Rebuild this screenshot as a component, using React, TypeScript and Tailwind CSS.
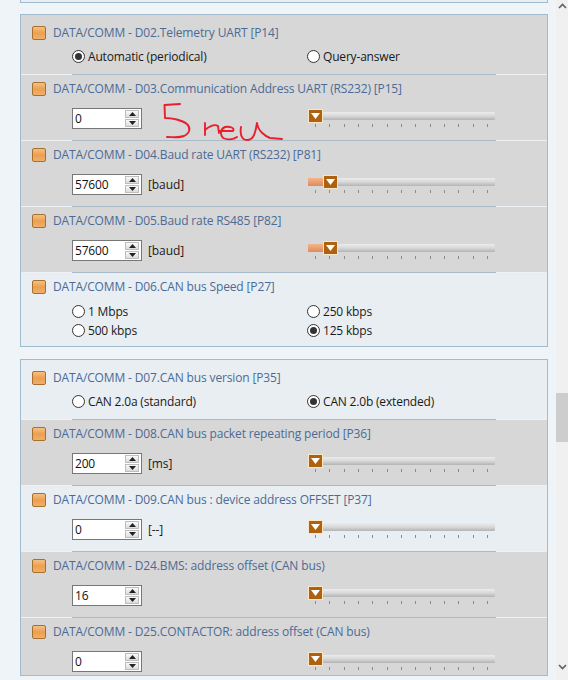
import React from "react";

const Icon = () => (
  <span className="block w-[14px] h-[14px] shrink-0 rounded-[2px] border border-[#a8702e] bg-gradient-to-b from-[#f3c083] via-[#ec9f4e] to-[#eeb06c]" />
);

const Title = ({ t }: { t: string }) => (
  <div className="flex items-center h-[24px] pl-[11px] gap-[7px]">
    <Icon />
    <span className="text-[#4b6b96] text-[12px] tracking-[-0.14px] whitespace-nowrap leading-[16px]">{t}</span>
  </div>
);

const Radio = ({ on, label }: { on?: boolean; label: string }) => (
  <div className="flex items-center gap-[3px] h-[19px] w-[235px] text-[#1a1a1a] text-[12px] tracking-[-0.18px]">
    <span className="flex items-center justify-center w-[13px] h-[13px] rounded-full border border-[#333] bg-white">
      {on && <span className="block w-[7px] h-[7px] rounded-full bg-[#333]" />}
    </span>
    <span className="whitespace-nowrap">{label}</span>
  </div>
);

const Arrow = ({ up }: { up?: boolean }) => (
  <span className="flex items-center justify-center w-[14px] h-[8px] bg-gradient-to-b from-[#fafafa] to-[#dcdcdc] border border-[#bdbdbd]">
    <svg width="7" height="4" viewBox="0 0 7 4">
      <path d={up ? "M3.5 0L7 4H0Z" : "M0 0H7L3.5 4Z"} fill="#222" />
    </svg>
  </span>
);

const Spin = ({ v }: { v: string }) => (
  <div className="flex items-center justify-between w-[70px] h-[21px] bg-white border border-[#777] pl-[2px] pr-[2px]">
    <span className="text-[12px] tracking-[-0.18px] text-[#111]">{v}</span>
    <span className="flex flex-col gap-[1px]">
      <Arrow up />
      <Arrow />
    </span>
  </div>
);

const Ticks = () => (
  <div className="flex justify-between w-[173px] ml-[7px] mt-[1px]">
    {Array.from({ length: 13 }).map((_, i) => (
      <span key={i} className="block w-px h-[3px] bg-[#8a8a8a]" />
    ))}
  </div>
);

const Slider = ({ fill }: { fill?: boolean }) => (
  <div className="w-[187px]">
    <div className="flex items-center h-[15px]">
      {fill && <span className="block w-[15px] h-[8px] bg-gradient-to-b from-[#f4b48a] to-[#e08a58]" />}
      <span className="flex items-center justify-center w-[15px] h-[14px] shrink-0 bg-[#ae620f] border border-[#f7e6c8]">
        <svg width="9" height="6" viewBox="0 0 9 6">
          <path d="M0 0H9L4.5 6Z" fill="#fff" />
        </svg>
      </span>
      <span className="block flex-1 h-[8px] rounded-r-[1px] bg-gradient-to-b from-[#ececec] via-[#d8d8d8] to-[#b4b4b4]" />
    </div>
    <Ticks />
  </div>
);

const Divider = () => (
  <div className="flex h-px">
    <span className="block w-[51px] bg-[#edf2f6]" />
    <span className="block w-[424px] bg-[#a9bbc9]" />
    <span className="block flex-1 bg-[#edf2f6]" />
  </div>
);

const Row = ({
  t,
  dark,
  h,
  pt,
  last,
  children,
}: {
  t: string;
  dark?: boolean;
  h: string;
  pt?: string;
  last?: boolean;
  children: React.ReactNode;
}) => (
  <div className={dark ? "bg-[#d7d7d7]" : "bg-[#e8eef2]"}>
    <div className={`${h} ${pt ?? "pt-[2px]"}`}>
      <Title t={t} />
      {children}
    </div>
    {!last && <Divider />}
  </div>
);

const SpinRow = ({
  t,
  dark,
  v,
  unit,
  fill,
  last,
  h,
}: {
  t: string;
  dark?: boolean;
  v: string;
  unit?: string;
  fill?: boolean;
  last?: boolean;
  h?: string;
}) => (
  <Row t={t} dark={dark} h={h ?? "h-[65px]"} last={last}>
    <div className="flex items-start pl-[51px] pt-[7px]">
      <Spin v={v} />
      <span className="w-[166px] pl-[6px] text-[12px] tracking-[-0.1px] leading-[21px] text-[#1a1a1a]">{unit}</span>
      <Slider fill={fill} />
    </div>
  </Row>
);

const RadioRow = ({
  t,
  dark,
  children,
}: {
  t: string;
  dark?: boolean;
  children: React.ReactNode;
}) => (
  <Row t={t} dark={dark} h="h-[59px]" pt="pt-[6px]">
    <div className="flex pl-[51px] pt-[2px]">{children}</div>
  </Row>
);

const Hand = () => (
  <svg className="absolute left-[155px] top-[98px]" width="135" height="46" viewBox="0 0 135 46" fill="none">
    <path
      d="M25 6L9.5 7L10 20C17 20 27 22 32 26C36 30 35 35 29 38C24 40 18 39 12 39"
      stroke="#e8202c"
      strokeWidth="1.9"
      strokeLinecap="round"
      strokeLinejoin="round"
    />
    <path
      d="M50 37L50 25M50 32C55 28 60 26 63 28L64 35M64 33H78C80 30 75 28 70 29C65 31 65 37 68 40C72 42 78 42 82 39M86 29C85 35 86 42 92 42C98 42 100 37 102 25C103 33 110 38 115 40L127 41"
      stroke="#e8202c"
      strokeWidth="1.9"
      strokeLinecap="round"
      strokeLinejoin="round"
    />
  </svg>
);

const Chevron = ({ up }: { up?: boolean }) => (
  <svg width="9" height="6" viewBox="0 0 9 6" fill="none">
    <path d={up ? "M1 5L4.5 1.5L8 5" : "M1 1L4.5 4.5L8 1"} stroke="#606060" strokeWidth="1.6" />
  </svg>
);

export default function App() {
  return (
    <div
      className="relative flex w-[568px] h-[680px] overflow-hidden bg-[#eff4f9]"
      style={{ fontFamily: '"Open Sans", "Noto Sans", sans-serif' }}
    >
      <div className="w-[556px] shrink-0 pl-[20px] pr-[8px]">
        <div className="h-[3px] border-x border-b border-[#a3bccd] bg-[#e8eef2]" />
        <div className="mt-[11px] border border-[#a3bccd]">
          <RadioRow t="DATA/COMM - D02.Telemetry UART [P14]" dark>
            <Radio on label="Automatic (periodical)" />
            <Radio label="Query-answer" />
          </RadioRow>
          <SpinRow t="DATA/COMM - D03.Communication Address UART (RS232) [P15]" dark v="0" />
          <SpinRow t="DATA/COMM - D04.Baud rate UART (RS232) [P81]" dark v="57600" unit="[baud]" fill />
          <SpinRow t="DATA/COMM - D05.Baud rate RS485 [P82]" dark v="57600" unit="[baud]" fill />
          <Row t="DATA/COMM - D06.CAN bus Speed [P27]" h="h-[73px]" last>
            <div className="flex pl-[51px] pt-[3px]">
              <div className="flex flex-col">
                <Radio label="1 Mbps" />
                <Radio label="500 kbps" />
              </div>
              <div className="flex flex-col">
                <Radio label="250 kbps" />
                <Radio on label="125 kbps" />
              </div>
            </div>
          </Row>
        </div>
        <div className="mt-[12px] border border-[#a3bccd]">
          <RadioRow t="DATA/COMM - D07.CAN bus version [P35]">
            <Radio label="CAN 2.0a (standard)" />
            <Radio on label="CAN 2.0b (extended)" />
          </RadioRow>
          <SpinRow t="DATA/COMM - D08.CAN bus packet repeating period [P36]" dark v="200" unit="[ms]" />
          <SpinRow t="DATA/COMM - D09.CAN bus : device address OFFSET [P37]" v="0" unit="[--]" />
          <SpinRow t="DATA/COMM - D24.BMS: address offset (CAN bus)" dark v="16" />
          <SpinRow t="DATA/COMM - D25.CONTACTOR: address offset (CAN bus)" dark v="0" last h="h-[57px]" />
        </div>
      </div>
      <div className="flex flex-col items-center w-[12px] bg-[#f0f0f0]">
        <div className="flex items-center justify-center h-[12px] w-full">
          <Chevron up />
        </div>
        <div className="mt-[381px] h-[49px] w-full bg-[#cdcdcd]" />
        <div className="mt-auto flex items-center justify-center h-[26px] w-full">
          <Chevron />
        </div>
      </div>
      <Hand />
    </div>
  );
}
